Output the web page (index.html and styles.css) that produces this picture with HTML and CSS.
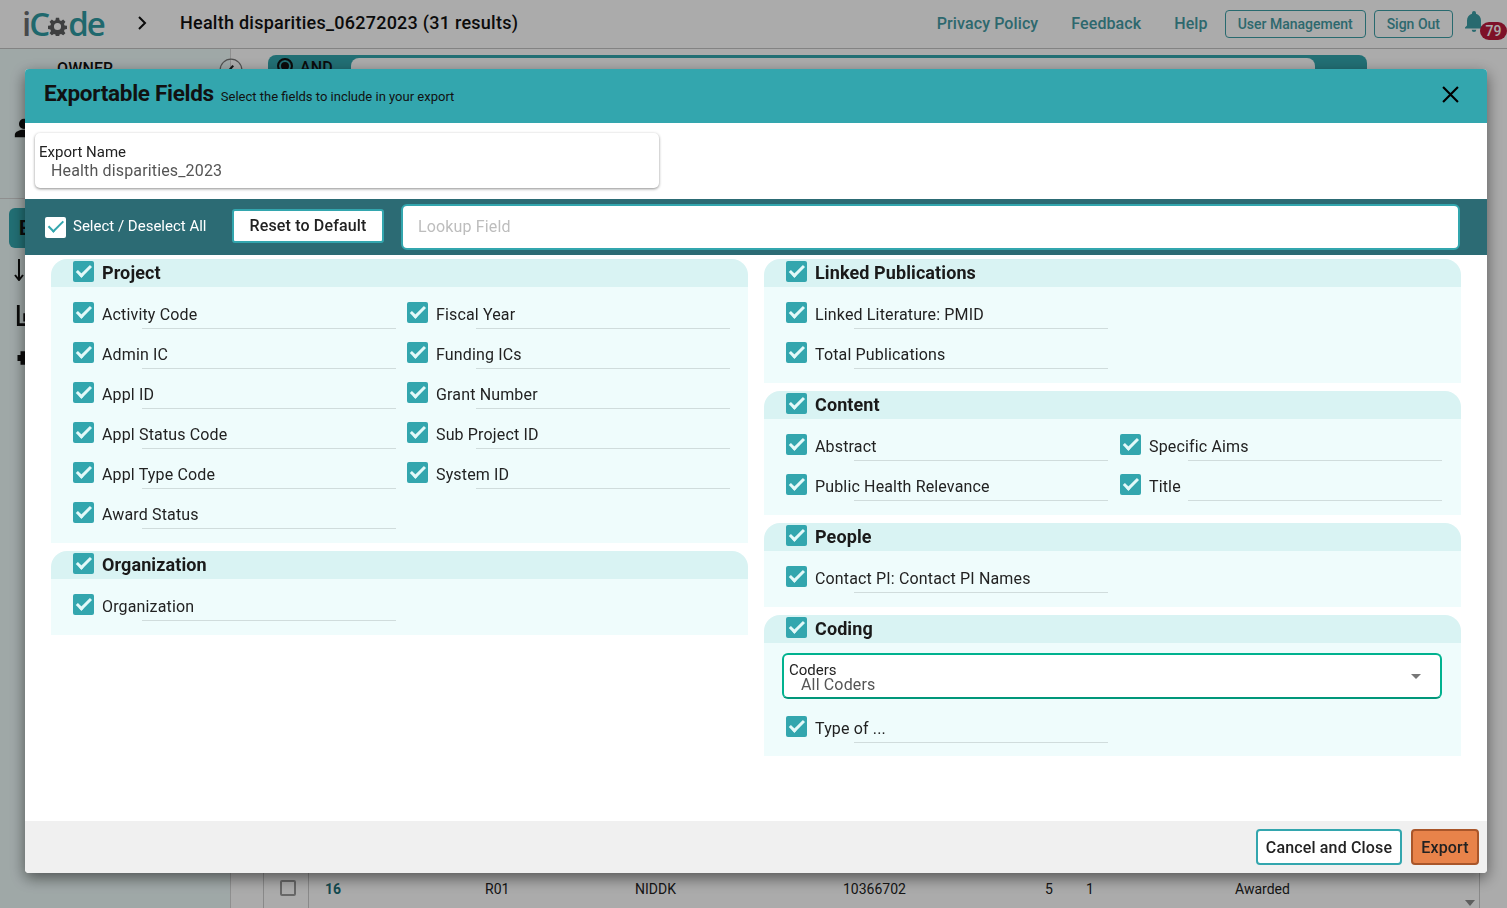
FILE: index.html
```html
<!DOCTYPE html>
<html lang="en">
<head>
  <meta charset="UTF-8">
  <meta name="viewport" content="width=device-width, initial-scale=1.0">
  <title>iCode - Exportable Fields</title>
  <link rel="stylesheet" href="styles.css">
</head>
<body>
  <header class="topbar">
    <div class="logo">
      <span class="logo-i">i</span><span class="logo-c">C</span><svg class="logo-gear" viewBox="0 0 24 24"><path fill="#5d5f60" fill-rule="evenodd" d="M10 1h4l.6 3.2 1.9.8 2.7-1.8 2.8 2.8-1.8 2.7.8 1.9 3 .6v4l-3 .6-.8 1.9 1.8 2.7-2.8 2.8-2.7-1.8-1.9.8-.6 3h-4l-.6-3-1.9-.8-2.7 1.8-2.8-2.8 1.8-2.7-.8-1.9-3-.6v-4l3-.6.8-1.9L2 6l2.800-2.800L7.500 5l1.900-.8zM12 7.500a4.500 4.500 0 1 0 0 9 4.500 4.500 0 0 0 0-9z"/></svg><span class="logo-c">de</span>
    </div>
    <svg class="crumb" viewBox="0 0 12 16"><path d="M3 2l6 6-6 6" fill="none" stroke="#111" stroke-width="2"/></svg>
    <div class="page-title">Health disparities_06272023 (31 results)</div>
    <nav class="top-links">
      <a class="top-link">Privacy Policy</a>
      <a class="top-link">Feedback</a>
      <a class="top-link">Help</a>
      <a class="top-btn">User Management</a>
      <a class="top-btn">Sign Out</a>
      <span class="bell">
        <svg viewBox="0 0 24 24"><path fill="#3c9ea6" d="M12 22a2.300 2.300 0 0 0 2.300-2.200H9.700A2.300 2.300 0 0 0 12 22zm7-6.500v-5c0-3.300-1.900-6-5-6.800V3a2 2 0 0 0-4 0v.7c-3.100.8-5 3.500-5 6.800v5L3 17.500v1h18v-1z"/></svg>
        <span class="badge">79</span>
      </span>
    </nav>
  </header>

  <div class="page">
    <aside class="sidebar">
      <div class="owner">OWNER</div>
      <svg class="side-icon person" viewBox="0 0 24 24"><path d="M12 2a5.500 5.500 0 1 1 0 11 5.500 5.500 0 0 1 0-11zm0 12c5 0 10 2.200 10 5.500V22H2v-2.500C2 16.200 7 14 12 14z"/></svg>
      <div class="side-rule"></div>
      <div class="side-tab"><span>E</span></div>
      <svg class="side-icon arrow" viewBox="0 0 10 22"><path d="M5 0v20M1 16l4 5 4-5" fill="none" stroke="#111" stroke-width="2"/></svg>
      <svg class="side-icon chart" viewBox="0 0 24 24"><path d="M1 1h3v20h22v3H1zM8 10h3v9H8zM14 5h3v14h-3z"/></svg>
      <svg class="side-icon puzzle" viewBox="0 0 24 24"><path d="M6 3h12v5h4v8h-4v5H6v-5H2V8h4z"/></svg>
    </aside>
    <main class="main">
      <div class="query">
        <span class="toggle"><svg viewBox="0 0 22 22"><circle cx="11" cy="11" r="10" fill="none" stroke="#777" stroke-width="1"/><path d="M7 14l6-7" stroke="#222" stroke-width="2"/></svg></span>
        <div class="and-bar">
          <span class="radio"></span>
          <span class="and-label">AND</span>
          <div class="and-input"></div>
        </div>
      </div>
      <div class="table-row">
        <span class="cell cell-box"><i class="row-check"></i></span>
        <span class="cell cell-num">16</span>
        <span class="cell cell-act">R01</span>
        <span class="cell cell-ic">NIDDK</span>
        <span class="cell cell-appl">10366702</span>
        <span class="cell cell-a">5</span>
        <span class="cell cell-b">1</span>
        <span class="cell cell-status">Awarded</span>
        <span class="scroll-arrow"></span>
      </div>
    </main>
  </div>

  <div class="backdrop"></div>

  <div class="modal">
    <div class="modal-head">
      <h2>Exportable Fields</h2>
      <span class="modal-sub">Select the fields to include in your export</span>
      <svg class="modal-close" viewBox="0 0 16 16"><path d="M1 1l14 14M15 1L1 15" stroke="#000" stroke-width="2"/></svg>
    </div>

    <div class="name-row">
      <div class="name-card">
        <div class="name-label">Export Name</div>
        <div class="name-value">Health disparities_2023</div>
      </div>
    </div>

    <div class="toolbar">
      <span class="check check-white"></span>
      <span class="select-all">Select / Deselect All</span>
      <button class="reset-btn">Reset to Default</button>
      <input class="lookup" type="text" placeholder="Lookup Field">
    </div>

    <div class="modal-body">
      <div class="col">
        <section class="group">
          <div class="group-head"><span class="check"></span><span>Project</span></div>
          <div class="group-body">
            <div class="fields">
              <div class="field"><span class="check"></span><span class="field-name">Activity Code</span><i class="rule"></i></div>
              <div class="field"><span class="check"></span><span class="field-name">Fiscal Year</span><i class="rule"></i></div>
              <div class="field"><span class="check"></span><span class="field-name">Admin IC</span><i class="rule"></i></div>
              <div class="field"><span class="check"></span><span class="field-name">Funding ICs</span><i class="rule"></i></div>
              <div class="field"><span class="check"></span><span class="field-name">Appl ID</span><i class="rule"></i></div>
              <div class="field"><span class="check"></span><span class="field-name">Grant Number</span><i class="rule"></i></div>
              <div class="field"><span class="check"></span><span class="field-name">Appl Status Code</span><i class="rule"></i></div>
              <div class="field"><span class="check"></span><span class="field-name">Sub Project ID</span><i class="rule"></i></div>
              <div class="field"><span class="check"></span><span class="field-name">Appl Type Code</span><i class="rule"></i></div>
              <div class="field"><span class="check"></span><span class="field-name">System ID</span><i class="rule"></i></div>
              <div class="field"><span class="check"></span><span class="field-name">Award Status</span><i class="rule"></i></div>
            </div>
          </div>
        </section>
        <section class="group">
          <div class="group-head"><span class="check"></span><span>Organization</span></div>
          <div class="group-body">
            <div class="fields">
              <div class="field"><span class="check"></span><span class="field-name">Organization</span><i class="rule"></i></div>
            </div>
          </div>
        </section>
      </div>

      <div class="col">
        <section class="group">
          <div class="group-head"><span class="check"></span><span>Linked Publications</span></div>
          <div class="group-body">
            <div class="fields">
              <div class="field"><span class="check"></span><span class="field-name">Linked Literature: PMID</span><i class="rule"></i></div>
              <div class="field field-first"><span class="check"></span><span class="field-name">Total Publications</span><i class="rule"></i></div>
            </div>
          </div>
        </section>
        <section class="group">
          <div class="group-head"><span class="check"></span><span>Content</span></div>
          <div class="group-body">
            <div class="fields">
              <div class="field"><span class="check"></span><span class="field-name">Abstract</span><i class="rule"></i></div>
              <div class="field"><span class="check"></span><span class="field-name">Specific Aims</span><i class="rule"></i></div>
              <div class="field"><span class="check"></span><span class="field-name">Public Health Relevance</span><i class="rule"></i></div>
              <div class="field"><span class="check"></span><span class="field-name">Title</span><i class="rule"></i></div>
            </div>
          </div>
        </section>
        <section class="group">
          <div class="group-head"><span class="check"></span><span>People</span></div>
          <div class="group-body">
            <div class="fields">
              <div class="field"><span class="check"></span><span class="field-name">Contact PI: Contact PI Names</span><i class="rule"></i></div>
            </div>
          </div>
        </section>
        <section class="group">
          <div class="group-head"><span class="check"></span><span>Coding</span></div>
          <div class="group-body group-body-tight">
            <div class="coders">
              <div class="coders-text">
                <div class="coders-label">Coders</div>
                <div class="coders-value">All Coders</div>
              </div>
              <span class="caret"></span>
            </div>
            <div class="fields">
              <div class="field"><span class="check"></span><span class="field-name">Type of ...</span><i class="rule"></i></div>
            </div>
          </div>
        </section>
      </div>
    </div>

    <div class="modal-foot">
      <button class="cancel-btn">Cancel and Close</button>
      <button class="export-btn">Export</button>
    </div>
  </div>
</body>
</html>
```

FILE: styles.css
```css
* {
  box-sizing: border-box;
}
html, body {
  height: 100%;
}
body {
  margin: 0;
  overflow: hidden;
  font-family: Roboto, 'Liberation Sans', sans-serif;
  letter-spacing: 0.15px;
  color: #222;
  background: #fff;
}

/* page behind the dialog */
.topbar {
  display: flex;
  align-items: center;
  height: 49px;
  padding-left: 22px;
  background: #fff;
  border-bottom: 1px solid #c4c4c4;
  box-shadow: 0 1px 2px rgba(0, 0, 0, 0.25);
}
.logo {
  display: flex;
  align-items: center;
  width: 114px;
  margin-top: -2px;
  font-family: 'Open Sans', sans-serif;
  font-size: 33px;
  font-weight: 600;
  line-height: 1;
  letter-spacing: -2px;
}
.logo-i {
  color: #6c6e70;
}
.logo-c {
  color: #2f9ba3;
}
.logo-gear {
  width: 19px;
  height: 19px;
  margin: 7px 1px 0 0;
}
.crumb {
  width: 12px;
  height: 16px;
  flex: none;
  margin-top: -2px;
}
.page-title {
  margin: -3px 0 0 32px;
  font-size: 18px;
  font-weight: 500;
  letter-spacing: 0.25px;
  color: #111;
}
.top-links {
  display: flex;
  align-items: center;
  margin-left: auto;
}
.top-link {
  margin: -1px 33px 0 0;
  font-size: 16px;
  font-weight: 500;
  letter-spacing: 0.1px;
  color: #449ca4;
}
.top-link:nth-child(3) {
  margin-right: 17px;
}
.top-btn {
  display: flex;
  align-items: center;
  height: 28px;
  padding: 0 12px;
  margin-right: 8px;
  border: 1px solid #3c9ea6;
  border-radius: 4px;
  font-size: 14px;
  font-weight: 500;
  letter-spacing: 0;
  color: #449ca4;
}
.top-btn:nth-child(5) {
  margin-right: 9px;
}
.bell {
  position: relative;
  width: 45px;
  height: 28px;
}
.bell svg {
  width: 24px;
  height: 24px;
  display: block;
}
.badge {
  position: absolute;
  left: 18px;
  top: 12px;
  width: 27px;
  height: 18px;
  border-radius: 9px;
  background: #bd1a3c;
  color: #fff;
  font-size: 14px;
  font-weight: 500;
  letter-spacing: 0;
  line-height: 18px;
  text-align: center;
}
.page {
  display: flex;
  height: 859px;
}
.sidebar {
  width: 231px;
  flex: none;
  padding-top: 10px;
  background: #eefbfa;
  border-right: 1px solid #d5d5d5;
}
.owner {
  margin-left: 57px;
  font-size: 16px;
  font-weight: 500;
  color: #111;
}
.side-icon {
  display: block;
  fill: #111;
}
.person {
  width: 22px;
  height: 22px;
  margin: 39px 0 0 13px;
}
.side-rule {
  height: 1px;
  margin-top: 59px;
  background: #d5d5d5;
}
.side-tab {
  width: 30px;
  height: 40px;
  margin: 9px 0 0 9px;
  padding: 8px 0 0 10px;
  border-radius: 6px;
  background: #33a6ae;
  font-size: 20px;
  font-weight: 700;
  color: #111;
}
.arrow {
  width: 10px;
  height: 22px;
  margin: 11px 0 0 14px;
}
.chart {
  width: 22px;
  height: 22px;
  margin: 23px 0 0 16px;
}
.puzzle {
  width: 18px;
  height: 18px;
  margin: 23px 0 0 16px;
}
.main {
  position: relative;
  flex: 1;
  background: #fff;
}
.query {
  display: flex;
  align-items: flex-start;
  padding-top: 6px;
}
.toggle {
  width: 37px;
  margin-left: -12px;
  padding-top: 3px;
}
.toggle svg {
  width: 24px;
  height: 24px;
  display: block;
}
.and-bar {
  display: flex;
  align-items: flex-start;
  width: 1099px;
  height: 40px;
  margin-left: 12px;
  padding: 3px 0 0 9px;
  border-radius: 8px 8px 0 0;
  background: #33a6ae;
}
.radio {
  width: 16px;
  height: 16px;
  margin-top: 0;
  border: 2px solid #111;
  border-radius: 50%;
  box-shadow: inset 0 0 0 2px #33a6ae, inset 0 0 0 8px #111;
}
.and-label {
  width: 51px;
  margin-left: 7px;
  font-size: 16px;
  font-weight: 500;
  color: #111;
}
.and-input {
  width: 964px;
  height: 30px;
  border-radius: 8px 8px 0 0;
  background: #fff;
}

/* last table row peeks out under the dialog */
.table-row {
  position: absolute;
  left: 32px;
  right: 27px;
  bottom: 0;
  display: flex;
  align-items: center;
  height: 35px;
  border-left: 1px solid #ccc;
  border-right: 1px solid #ccc;
  font-size: 14px;
  letter-spacing: 0;
  color: #222;
}
.cell {
  position: absolute;
  top: 8px;
}
.cell-box {
  left: 0;
  width: 45px;
  height: 35px;
  top: 0;
  border-right: 1px solid #ccc;
}
.row-check {
  position: absolute;
  left: 16px;
  top: 7px;
  width: 16px;
  height: 16px;
  border: 2px solid #9a9a9a;
  border-radius: 2px;
}
.cell-num {
  left: 61px;
  font-weight: 700;
  color: #1c6f78;
}
.cell-act {
  left: 221px;
}
.cell-ic {
  left: 371px;
}
.cell-appl {
  left: 579px;
}
.cell-a {
  left: 781px;
}
.cell-b {
  left: 822px;
}
.cell-status {
  left: 971px;
}
.scroll-arrow {
  position: absolute;
  right: 4px;
  bottom: 2px;
  border-left: 5px solid transparent;
  border-right: 5px solid transparent;
  border-top: 6px solid #8c8c8c;
}

.backdrop {
  position: fixed;
  inset: 0;
  background: rgba(0, 0, 0, 0.33);
}

/* dialog */
.modal {
  position: fixed;
  left: 25px;
  top: 69px;
  width: 1462px;
  height: 804px;
  display: flex;
  flex-direction: column;
  background: #fff;
  border-radius: 4px;
  box-shadow: 0 5px 15px rgba(0, 0, 0, 0.5);
}
.modal-head {
  display: flex;
  align-items: center;
  flex: none;
  height: 54px;
  padding: 0 28px 0 19px;
  background: #33a6ae;
  border-radius: 4px 4px 0 0;
}
.modal-head h2 {
  margin: 0 0 7px;
  font-size: 22.5px;
  font-weight: 700;
  color: #111;
  letter-spacing: -0.3px;
}
.modal-sub {
  margin: 1px 0 0 7px;
  font-size: 13px;
  letter-spacing: 0;
  color: #111;
}
.modal-close {
  width: 17px;
  height: 17px;
  margin: 0 0 3px auto;
}
.name-row {
  flex: none;
  height: 76px;
  padding: 10px 0 0 10px;
}
.name-card {
  width: 624px;
  height: 55px;
  padding: 10px 0 0 4px;
  background: #fff;
  border-radius: 5px;
  box-shadow: 0 1px 3px rgba(0, 0, 0, 0.45);
}
.name-label {
  font-size: 15px;
  line-height: 18px;
  letter-spacing: 0;
  color: #222;
}
.name-value {
  margin-left: 12px;
  font-size: 16px;
  line-height: 20px;
  color: #555;
}
.toolbar {
  display: flex;
  align-items: center;
  flex: none;
  height: 56px;
  padding-left: 20px;
  background: #2c6b74;
}
.select-all {
  width: 159px;
  margin: -2px 0 0 7px;
  font-size: 15px;
  letter-spacing: 0;
  color: #fff;
}
.reset-btn {
  width: 152px;
  height: 34px;
  margin-top: -3px;
  padding: 0;
  background: #fff;
  border: 2px solid #33a6ae;
  border-radius: 3px;
  font-family: inherit;
  font-size: 16px;
  font-weight: 500;
  letter-spacing: inherit;
  color: #222;
}
.lookup {
  width: 1059px;
  height: 46px;
  margin-left: 17px;
  padding: 0 15px 2px;
  background: #fff;
  border: 2px solid #33a6ae;
  border-radius: 6px;
  font-family: inherit;
  font-size: 16px;
  letter-spacing: inherit;
}
.lookup::placeholder {
  color: #bdbdbd;
}

/* check boxes */
.check {
  position: relative;
  display: block;
  flex: none;
  width: 21px;
  height: 21px;
  background: #33a6ae;
  border-radius: 2px;
}
.check::after {
  content: "";
  box-sizing: border-box;
  position: absolute;
  left: 7px;
  top: 0.600px;
  width: 7.800px;
  height: 14.800px;
  border: solid #e3f9f9;
  border-width: 0 3px 3px 0;
  transform: rotate(45deg);
}
.check-white {
  background: #fff;
}
.check-white::after {
  border-color: #33a6ae;
  border-width: 0 2px 2px 0;
}

.modal-body {
  flex: 1;
  display: grid;
  grid-template-columns: 697px 697px;
  gap: 16px;
  align-content: start;
  padding: 4px 26px 0;
}
.col {
  display: flex;
  flex-direction: column;
  gap: 8px;
}
.group-head {
  display: flex;
  align-items: center;
  gap: 8px;
  height: 28px;
  padding: 0 0 3px 22px;
  background: #d9f3f3;
  border-radius: 16px 16px 0 0;
  font-size: 18px;
  font-weight: 700;
  letter-spacing: 0.1px;
  color: #1a1a1a;
}
.group-head span:last-child {
  padding-top: 2px;
}
.group-body {
  padding: 7px 18px 9px 22px;
  background: #effcfc;
}
.group-body-tight {
  padding-top: 10px;
  padding-bottom: 8px;
}
.fields {
  display: grid;
  grid-template-columns: 323px 323px;
  column-gap: 11px;
}
.field {
  position: relative;
  display: flex;
  gap: 8px;
  height: 40px;
  padding-top: 8px;
}
.field-name {
  font-size: 16px;
  line-height: 26px;
  color: #222;
}
.rule {
  position: absolute;
  left: 69px;
  right: 0;
  top: 34px;
  height: 1px;
  background: #d0dcdc;
}
.col + .col .rule {
  left: 68px;
  right: 1px;
}
/* Linked Publications is stacked on one side only */
.field-first {
  grid-column: 1;
}
.coders {
  display: flex;
  align-items: center;
  width: 660px;
  height: 46px;
  margin: 0 0 9px -4px;
  padding-left: 5px;
  background: #fff;
  border: 2px solid #00b28f;
  border-bottom-color: #00977a;
  border-radius: 6px;
}
.coders-text {
  flex: 1;
  padding-top: 3px;
}
.coders-label {
  font-size: 15px;
  line-height: 14px;
  letter-spacing: 0;
  color: #222;
}
.coders-value {
  margin-left: 12px;
  font-size: 16px;
  line-height: 15px;
  color: #555;
}
.caret {
  width: 0;
  height: 0;
  margin-right: 19px;
  border-left: 5px solid transparent;
  border-right: 5px solid transparent;
  border-top: 5px solid #777;
}
.modal-foot {
  display: flex;
  justify-content: flex-end;
  align-items: flex-start;
  gap: 9px;
  flex: none;
  height: 52px;
  padding: 8px 8px 0 0;
  background: #f0f0f0;
  border-radius: 0 0 4px 4px;
}
.cancel-btn,
.export-btn {
  height: 36px;
  padding: 0;
  border-radius: 4px;
  font-family: inherit;
  font-size: 16px;
  font-weight: 500;
  letter-spacing: inherit;
  color: #222;
}
.cancel-btn {
  width: 146px;
  background: #fff;
  border: 2px solid #33a6ae;
}
.export-btn {
  width: 68px;
  background: #e8834a;
  border: 2px solid #a9562a;
}
```
